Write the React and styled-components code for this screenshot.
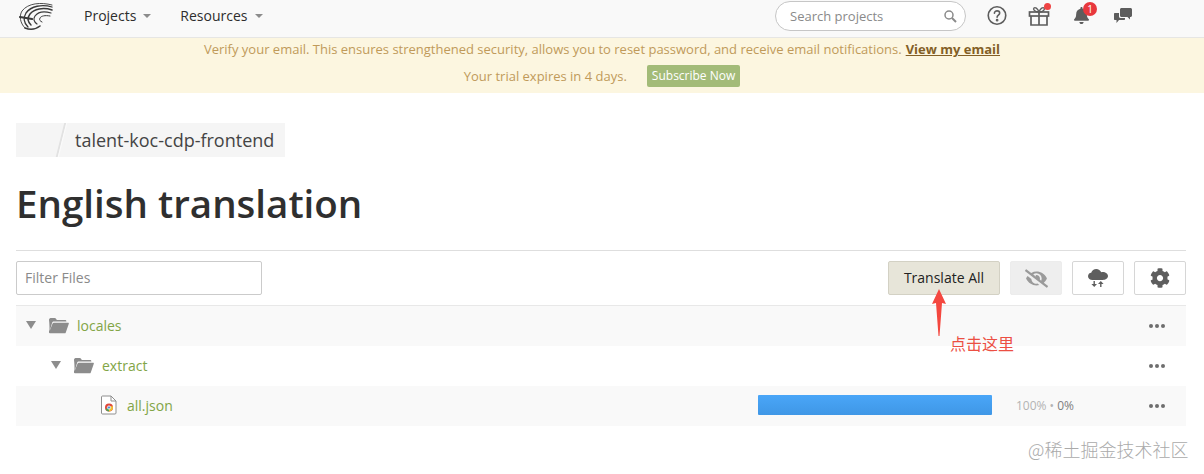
import React from "react";
import styled, { createGlobalStyle } from "styled-components";
import { FaBell, FaCog, FaEyeSlash } from "react-icons/fa";

const Global = createGlobalStyle`
  html, body {
    margin: 0;
    padding: 0;
    background: #fff;
    font-family: "Open Sans", "Noto Sans CJK SC", sans-serif;
  }
  * { box-sizing: border-box; }
`;

const Page = styled.div`
  position: relative;
  width: 1204px;
  height: 474px;
  overflow: hidden;
`;

const Header = styled.header`
  display: flex;
  align-items: center;
  height: 38px;
  padding-left: 19px;
  background: #f9f9f9;
  border-bottom: 1px solid #e6e6e4;
`;

const Logo = styled.svg`
  width: 35px;
  height: 28px;
  margin-right: 30px;
  margin-top: -3px;
`;

const NavItem = styled.div`
  display: flex;
  align-items: center;
  gap: 7px;
  margin-right: 29px;
  font-size: 14px;
  color: #2d2d2d;
  margin-top: -6px;
  &::after {
    content: "";
    border-left: 4px solid transparent;
    border-right: 4px solid transparent;
    border-top: 4px solid #8c8c8c;
  }
`;

const HeaderRight = styled.div`
  margin-left: auto;
  display: flex;
  align-items: center;
  padding-right: 72px;
  margin-top: -6px;
`;

const Search = styled.div`
  display: flex;
  align-items: center;
  justify-content: space-between;
  width: 191px;
  height: 30px;
  padding: 0 8px 0 14px;
  margin-right: 21px;
  background: #fff;
  border: 1px solid #c6c6c6;
  border-radius: 15px;
  font-size: 13px;
  color: #8a8a8a;
`;

const IconSlot = styled.div`
  position: relative;
  display: flex;
  width: ${(p) => p.$w}px;
  margin-right: ${(p) => p.$gap}px;
  color: #5d5d5d;
`;

const Dot = styled.span`
  position: absolute;
  top: -3px;
  right: -1px;
  width: 7px;
  height: 7px;
  border-radius: 50%;
  background: #ef4444;
`;

const Badge = styled.span`
  position: absolute;
  top: -5px;
  right: -7px;
  width: 14px;
  height: 14px;
  border-radius: 50%;
  background: #e8383d;
  color: #fff;
  font-size: 10px;
  line-height: 14px;
  text-align: center;
`;

const Banner = styled.div`
  display: flex;
  flex-direction: column;
  align-items: center;
  height: 55px;
  background: #fcf6e0;
  font-size: 13px;
  color: #c09a5a;
`;

const BannerLine = styled.div`
  display: flex;
  align-items: center;
  height: ${(p) => p.$h}px;
  a {
    margin-left: 4px;
    font-weight: 700;
    color: #835f26;
    text-decoration: underline;
  }
`;

const SubscribeBtn = styled.span`
  margin-left: 20px;
  padding: 0 5px;
  height: 22px;
  line-height: 22px;
  font-size: 12px;
  background: #a3bb78;
  color: #fff;
  border-radius: 2px;
`;

const Main = styled.main`
  padding: 30px 18px 0 16px;
`;

const Crumb = styled.div`
  position: relative;
  display: inline-flex;
  align-items: center;
  height: 34px;
  width: 269px;
  padding-left: 59px;
  background: #f5f5f5;
  font-size: 18px;
  color: #444;
  vertical-align: top;
  &::before {
    content: "";
    position: absolute;
    left: 44px;
    top: 0;
    width: 0;
    height: 34px;
    border-left: 2px solid #e2e2e2;
    transform: skewX(-14deg);
  }
  &::after {
    content: "";
    position: absolute;
    left: 45px;
    top: 0;
    width: 1px;
    height: 34px;
    background: #fbfbfb;
    transform: skewX(-14deg) translateX(1px);
  }
`;

const Title = styled.h1`
  margin: 15px 0 0;
  height: 79px;
  font-size: 38.5px;
  line-height: 62px;
  font-weight: 600;
  color: #2f2f2f;
  border-bottom: 1px solid #dedede;
`;

const Toolbar = styled.div`
  display: flex;
  align-items: center;
  height: 55px;
  border-bottom: 1px solid #e8e8e8;
`;

const Filter = styled.div`
  display: flex;
  align-items: center;
  width: 246px;
  height: 34px;
  padding: 0 0 2px 8px;
  border: 1px solid #cbcbcb;
  border-radius: 2px;
  font-size: 14px;
  color: #8a8a8a;
`;

const Actions = styled.div`
  margin-left: auto;
  display: flex;
  align-items: center;
  gap: 10px;
`;

const ActionBtn = styled.div`
  display: flex;
  align-items: center;
  justify-content: center;
  width: ${(p) => p.$w || 52}px;
  height: 34px;
  padding-bottom: ${(p) => (p.$primary ? "2px" : "0")};
  font-size: 14px;
  border-radius: 2px;
  color: ${(p) => (p.$primary ? "#222" : "#5e5e5e")};
  background: ${(p) => (p.$primary ? "#e7e5d9" : p.$muted ? "#eeeeee" : "#fff")};
  border: 1px solid ${(p) => (p.$primary ? "#d3d1c4" : p.$muted ? "#ececec" : "#d6d6d6")};
`;

const Row = styled.div`
  display: flex;
  align-items: center;
  height: 40px;
  padding-left: ${(p) => p.$indent}px;
  padding-bottom: 2px;
  background: ${(p) => (p.$shaded ? "#f9f9f9" : "#fff")};
  font-size: 14px;
  color: #82a546;
`;

const Caret = styled.span`
  width: 0;
  margin-right: 12px;
  border-left: 5px solid transparent;
  border-right: 5px solid transparent;
  border-top: 8px solid #8d8d8d;
`;

const FolderIcon = styled.svg`
  width: 21px;
  height: 17px;
  margin-right: 8px;
`;

const FileIcon = styled.svg`
  width: 16px;
  height: 20px;
  margin-right: 10px;
`;

const ProgressWrap = styled.div`
  margin-left: auto;
  display: flex;
  align-items: center;
`;

const Bar = styled.div`
  width: 234px;
  height: 20px;
  background: linear-gradient(#4aa6f8, #3f97e6);
  border-radius: 1px;
`;

const Stats = styled.div`
  width: 157px;
  padding-left: 24px;
  font-size: 12px;
  color: #b3b3b3;
  b {
    font-weight: 400;
    color: #808080;
  }
`;

const More = styled.div`
  display: flex;
  gap: 2px;
  margin-top: 2px;
  margin-left: ${(p) => (p.$inline ? "0" : "auto")};
  margin-right: 21px;
  span {
    width: 4px;
    height: 4px;
    border-radius: 50%;
    background: #6e6e6e;
  }
`;

const Arrow = styled.svg`
  position: absolute;
  left: 931px;
  top: 289px;
  width: 16px;
  height: 48px;
`;

const Note = styled.div`
  position: absolute;
  left: 950px;
  top: 333px;
  font-size: 16px;
  line-height: 20px;
  color: #ec4f43;
  font-family: "Noto Sans CJK SC", sans-serif;
`;

const Watermark = styled.div`
  position: absolute;
  left: 1028px;
  top: 437px;
  font-size: 18px;
  line-height: 24px;
  color: #aaaaaa;
  font-family: "Noto Sans CJK SC", sans-serif;
  font-weight: 300;
  white-space: nowrap;
`;

const Dots = ({ inline }) => (
  <More $inline={inline}>
    <span />
    <span />
    <span />
  </More>
);

const Folder = () => (
  <FolderIcon viewBox="0 0 21 17">
    <path d="M1 3c0-1 .6-2 1.600-2h4c.8 0 1.200.4 1.600 1l.6 1H17c1 0 1.400.6 1.400 1.400H6c-1 0-1.600.5-1.800 1.200L2 13z" fill="#8c8c8c" />
    <path d="M1 15.500V5l.6 9L4.600 6.600c.2-.6.6-.8 1.200-.8H20c.7 0 1 .4.8 1l-3 8.600c-.2.6-.6.9-1.200.9H2c-.7 0-1-.3-1-.8z" fill="#8c8c8c" />
  </FolderIcon>
);

const App = () => (
  <Page>
    <Global />
    <Header>
      <Logo viewBox="0 0 35 28" fill="none" stroke="#3a3a3a" strokeLinecap="round">
        <path d="M33 2C22-1 9 0 3 8c-3 5-2 12 3 17" strokeWidth=".9" />
        <path d="M33 4C23 1 12 3 7 10c-3 5-2 10 2 14" strokeWidth="1.300" />
        <path d="M33 7C24 4 15 6 11 11c-3 4-2 8 1 11" strokeWidth="1.500" />
        <path d="M32 10c-7-2-13-1-16 3-2 3-1 6 2 8" strokeWidth="1.200" />
        <path d="M31 13c-5-1-9 0-10 2-1 2 0 3 2 4" strokeWidth="1" />
        <path d="M1 14l12 2" strokeWidth="2.200" />
        <path d="M6 25c5 2 10 2 15-2" strokeWidth="1.600" />
      </Logo>
      <NavItem>Projects</NavItem>
      <NavItem>Resources</NavItem>
      <HeaderRight>
        <Search>
          Search projects
          <svg width="14" height="14" viewBox="0 0 14 14" fill="none" stroke="#8a8a8a" strokeWidth="1.500">
            <circle cx="6" cy="6" r="4" />
            <path d="M9 9l4 4" strokeWidth="2" />
          </svg>
        </Search>
        <IconSlot $w={20} $gap={21}>
          <svg width="21" height="21" viewBox="0 0 21 21" fill="none" stroke="#5d5d5d" strokeWidth="1.700">
            <circle cx="10.500" cy="10.500" r="9.200" />
            <path d="M7.800 8.200c0-1.600 1.200-2.600 2.800-2.600s2.700 1 2.700 2.400c0 2.200-2.700 2.200-2.700 4.400" strokeLinecap="round" />
            <circle cx="10.600" cy="15.400" r=".6" fill="#5d5d5d" />
          </svg>
        </IconSlot>
        <IconSlot $w={22} $gap={23}>
          <svg width="22" height="20" viewBox="0 0 21 20" fill="none" stroke="#5d5d5d" strokeWidth="1.700">
            <rect x="1" y="6" width="19" height="4" />
            <path d="M2.500 10v9h16v-9M10.500 6v13" />
            <path d="M10.500 6C9 2 6.500 1 5.500 2s0 4 5 4c5 0 6-3 5-4s-3.500 0-5 4z" strokeWidth="1.400" />
          </svg>
          <Dot />
        </IconSlot>
        <IconSlot $w={17} $gap={24}>
          <FaBell size={17} />
          <Badge>1</Badge>
        </IconSlot>
        <IconSlot $w={18} $gap={0}>
          <svg width="18" height="16" viewBox="0 0 18 16" fill="#5d5d5d">
            <path d="M6 1.500C6 .7 6.700 0 7.500 0h9C17.300 0 18 .7 18 1.500v6c0 .8-.7 1.500-1.500 1.500H16v2.500L13.500 9H7.500C6.700 9 6 8.300 6 7.500z" />
            <path d="M1 5h4v3.500C5 9.500 6 10 7 10h4v1c0 .6-.4 1-1 1H5l-2.500 3v-3H1c-.6 0-1-.4-1-1V6c0-.6.4-1 1-1z" />
          </svg>
        </IconSlot>
      </HeaderRight>
    </Header>

    <Banner>
      <BannerLine $h={22}>
        Verify your email. This ensures strengthened security, allows you to reset password, and receive email notifications.
        <a>View my email</a>
      </BannerLine>
      <BannerLine $h={32}>
        Your trial expires in 4 days.
        <SubscribeBtn>Subscribe Now</SubscribeBtn>
      </BannerLine>
    </Banner>

    <Main>
      <Crumb>talent-koc-cdp-frontend</Crumb>
      <Title>English translation</Title>
      <Toolbar>
        <Filter>Filter Files</Filter>
        <Actions>
          <ActionBtn $primary $w={112}>Translate All</ActionBtn>
          <ActionBtn $muted>
            <FaEyeSlash size={23} color="#9a9a9a" />
          </ActionBtn>
          <ActionBtn>
            <svg width="20" height="18" viewBox="0 0 20 18" fill="#5e5e5e">
              <path d="M4.500 11C2 11 0 9.500 0 7.300 0 5.400 1.400 4 3.200 3.800 3.900 1.600 5.900 0 8.300 0c2.200 0 4.100 1.300 4.900 3.200 .5-.2 1-.3 1.500-.3 2.900 0 5.300 1.800 5.300 4.200S17.600 11 15 11z" />
              <path d="M5.500 12h1.400v3H9l-2.800 3-2.800-3h2.100zM13.500 18h-1.400v-3H10l2.800-3 2.800 3h-2.100z" />
            </svg>
          </ActionBtn>
          <ActionBtn>
            <FaCog size={20} />
          </ActionBtn>
        </Actions>
      </Toolbar>

      <Row $shaded $indent={10}>
        <Caret />
        <Folder />
        locales
        <Dots />
      </Row>
      <Row $indent={35}>
        <Caret />
        <Folder />
        extract
        <Dots />
      </Row>
      <Row $shaded $indent={85}>
        <FileIcon viewBox="0 0 16 20">
          <path d="M1.500 1h8.500l5 5v12c0 .6-.4 1-1 1H1.500c-.6 0-1-.4-1-1V2c0-.6.4-1 1-1z" fill="#fff" stroke="#8f8f8f" />
          <path d="M10 1v5h5" fill="none" stroke="#8f8f8f" />
          <circle cx="8" cy="12.500" r="4" fill="#e0483a" />
          <path d="M4.600 14.600A4 4 0 0 0 8 16.500l2-3.500H6z" fill="#4aa257" />
          <path d="M8 16.500a4 4 0 0 0 3.800-5.300H8z" fill="#f2c230" />
          <circle cx="8" cy="12.500" r="1.600" fill="#4a8fe0" stroke="#fff" strokeWidth=".8" />
        </FileIcon>
        all.json
        <ProgressWrap>
          <Bar />
          <Stats>
            100% • <b>0%</b>
          </Stats>
        </ProgressWrap>
        <Dots inline />
      </Row>
    </Main>

    <Arrow viewBox="0 0 16 48">
      <path d="M8 0L15 15 11 14 8.500 47h-1L5 14 1 15z" fill="#f4473f" />
    </Arrow>
    <Note>点击这里</Note>
    <Watermark>@稀土掘金技术社区</Watermark>
  </Page>
);

export default App;
